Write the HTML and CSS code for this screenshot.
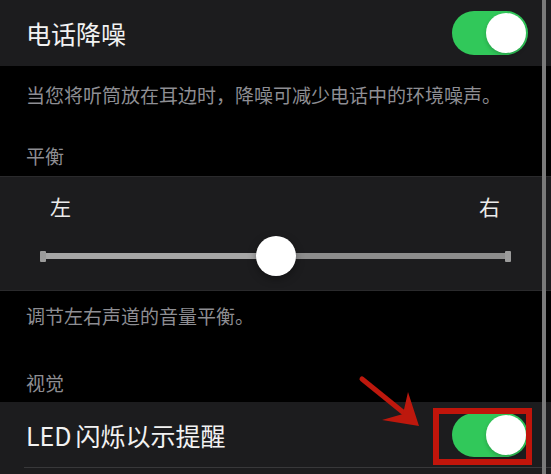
FILE: index.html
```html
<!DOCTYPE html>
<html lang="zh-CN">
<head>
<meta charset="utf-8">
<title>音频设置</title>
<link rel="stylesheet" href="styles.css">
</head>
<body>
<div class="screen">
  <div class="row">
    <span class="title">电话降噪</span>
    <div class="switch"><span class="knob"></span></div>
  </div>
  <p class="footnote">当您将听筒放在耳边时，降噪可减少电话中的环境噪声。</p>
  <p class="header">平衡</p>
  <div class="balance">
    <div class="labels"><span>左</span><span>右</span></div>
    <div class="slider">
      <span class="cap"></span>
      <span class="track"></span>
      <span class="cap"></span>
      <span class="thumb"></span>
    </div>
  </div>
  <p class="footnote footnote-second">调节左右声道的音量平衡。</p>
  <p class="header header-second">视觉</p>
  <div class="row row-led">
    <span class="title"><span class="latin">LED</span>闪烁以示提醒</span>
    <div class="switch"><span class="knob"></span></div>
    <span class="highlight"></span>
  </div>
  <div class="row-rest"></div>
  <svg class="arrow" width="551" height="474" viewBox="0 0 551 474" aria-hidden="true">
    <line x1="362" y1="379" x2="404" y2="413" stroke="#bd180d" stroke-width="5" stroke-linecap="round"/>
    <path d="M419 426 L382 420 L403 414 L408 392 Z" fill="#bd180d"/>
  </svg>
  <span class="scrollbar"></span>
</div>
</body>
</html>
```

FILE: styles.css
```css
html, body {
  margin: 0;
  padding: 0;
  background: #000;
}

body {
  font-family: "Noto Sans CJK SC", "Noto Sans", sans-serif;
  width: 551px;
  height: 474px;
  overflow: hidden;
}

.screen {
  position: relative;
  width: 551px;
  height: 474px;
  overflow: hidden;
  background: #000;
}

.row {
  height: 66px;
  box-sizing: border-box;
  background: #1c1c1e;
  display: flex;
  align-items: center;
  justify-content: space-between;
  padding: 0 23px 0 26px;
}

.title {
  font-size: 25px;
  line-height: 1;
  color: #f2f2f2;
}

.latin {
  margin-right: 4px;
}

.switch {
  width: 76px;
  height: 44px;
  box-sizing: border-box;
  border-radius: 22px;
  background: #31c85a;
  padding: 2px;
  display: flex;
  justify-content: flex-end;
  align-items: center;
}

.knob {
  width: 40px;
  height: 40px;
  border-radius: 50%;
  background: #fff;
  box-shadow: 0 2px 4px rgba(0, 0, 0, 0.2);
}

.footnote,
.header {
  margin: 0;
  font-size: 19px;
  line-height: 24px;
  color: #8e8e93;
  padding: 0 26px;
}

.footnote {
  padding-top: 17px;
}

.header {
  padding-top: 37px;
  padding-bottom: 8px;
}

.footnote-second {
  padding-top: 13px;
}

.header-second {
  padding-top: 43px;
  padding-bottom: 7px;
}

.balance {
  height: 115px;
  box-sizing: border-box;
  background: #1c1c1e;
  border-top: 1px solid #2a2a2c;
  border-bottom: 1px solid #2a2a2c;
  padding: 0 40px;
}

.labels {
  display: flex;
  justify-content: space-between;
  padding: 19px 11px 0 10px;
  font-size: 21px;
  line-height: 21px;
  color: #ececec;
}

.slider {
  position: relative;
  margin-top: 19px;
  height: 40px;
  display: flex;
  align-items: center;
}

.cap {
  width: 6px;
  height: 11px;
  background: #9b9b9b;
  border-radius: 1px;
}

.track {
  flex: 1;
  height: 6px;
  background: linear-gradient(to right, #a6a6a6 0%, #a6a6a6 50%, #8d8d8d 50%, #8d8d8d 100%);
}

.thumb {
  position: absolute;
  left: 50%;
  top: 0;
  width: 40px;
  height: 40px;
  margin-left: -20px;
  border-radius: 50%;
  background: #fff;
  box-shadow: 0 3px 8px rgba(0, 0, 0, 0.35);
}

.row-led {
  position: relative;
}

.row-led::after {
  content: "";
  position: absolute;
  left: 24px;
  right: 0;
  bottom: 0;
  height: 1px;
  background: #38383a;
}

.highlight {
  position: absolute;
  left: 433px;
  top: 6px;
  width: 99px;
  height: 57px;
  box-sizing: border-box;
  border: 6px solid #c1150b;
}

.row-rest {
  height: 20px;
  background: #1c1c1e;
}

.arrow {
  position: absolute;
  left: 0;
  top: 0;
  pointer-events: none;
}

.scrollbar {
  position: absolute;
  left: 542px;
  top: 0;
  width: 4px;
  height: 474px;
  background: #7a7a7a;
}
```
